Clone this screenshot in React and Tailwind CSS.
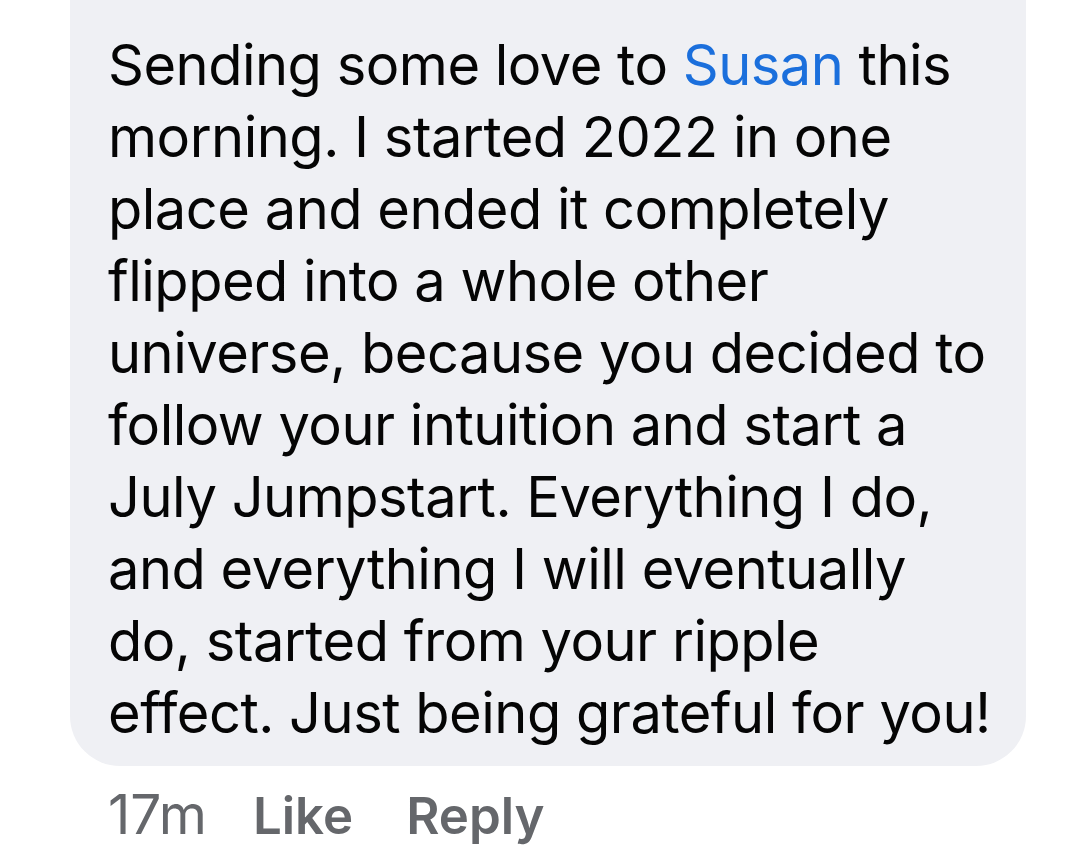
const lines = [
  "morning. I started 2022 in one",
  "place and ended it completely",
  "flipped into a whole other",
  "universe, because you decided to",
  "follow your intuition and start a",
  "July Jumpstart. Everything I do,",
  "and everything I will eventually",
  "do, started from your ripple",
  "effect. Just being grateful for you!",
];

export default function App() {
  return (
    <div
      className="h-[868px] w-[1065px] overflow-hidden bg-white"
      style={{ fontFamily: "Inter, 'Noto Sans', sans-serif" }}
    >
      <div className="ml-[70px] w-[956px] rounded-b-[50px] bg-[#eff0f4] pb-[17px] pl-[38px] pt-[29px]">
        <div className="whitespace-nowrap text-[56px] leading-[72px] tracking-[-0.5px] text-[#050505]">
          <div>
            Sending some love to <span className="text-[#1b6fdc]">Susan</span> this
          </div>
          {lines.map((l) => (
            <div key={l}>{l}</div>
          ))}
        </div>
      </div>
      <div className="ml-[108px] mt-[12px] flex items-baseline leading-[72px] text-[#65676b]">
        <span className="text-[55px]">17m</span>
        <span className="ml-[46px] text-[51px] font-semibold">Like</span>
        <span className="ml-[53px] text-[51px] font-semibold">Reply</span>
      </div>
    </div>
  );
}
